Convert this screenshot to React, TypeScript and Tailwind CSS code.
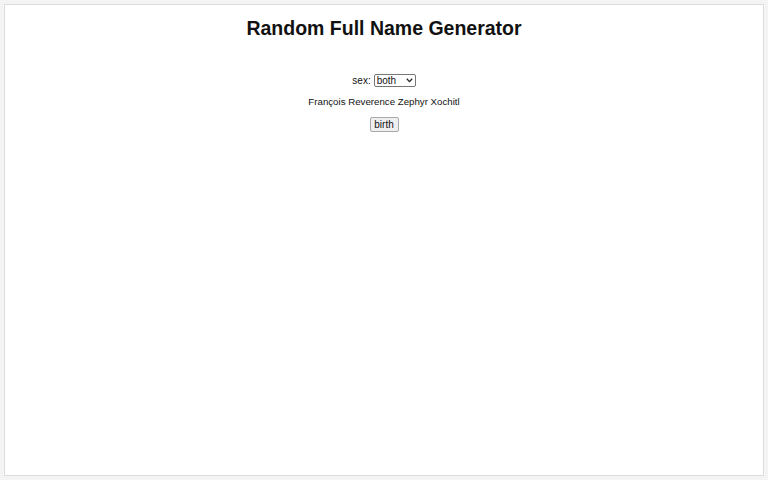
import { useState } from 'react';

export default function App() {
  const [sex, setSex] = useState('both');

  return (
    <div className="h-screen bg-[#f4f4f4] p-[4px] font-['Liberation_Sans',Arial,sans-serif] text-black">
      <div className="h-full bg-white border border-[#dcdcdc] flex flex-col items-center">
        <h1 className="mt-[12px] text-[19.5px] font-bold leading-[22px] text-[#111]">Random Full Name Generator</h1>
        <div className="mt-[35px] flex items-center gap-[3px] text-[10px] leading-[13px] text-[#111]">
          <span>sex:</span>
          <div className="relative">
            <select
              value={sex}
              onChange={(e) => setSex(e.target.value)}
              className="appearance-none block h-[13px] w-[42px] border border-[#767676] rounded-[2px] bg-white text-[10px] leading-[11px] pl-[2px] pr-[12px] text-[#111]"
            >
              <option value="both">both</option>
              <option value="male">male</option>
              <option value="female">female</option>
            </select>
            <svg className="absolute right-[3px] top-[4px] pointer-events-none" width="7" height="5" viewBox="0 0 7 5">
              <path d="M0.8 0.8 L3.5 3.6 L6.2 0.8" fill="none" stroke="#222" strokeWidth="1.3" />
            </svg>
          </div>
        </div>
        <p className="mt-[8px] text-[9.7px] leading-[13px] text-[#111]">François Reverence Zephyr Xochitl</p>
        <button className="mt-[9px] h-[15px] w-[29px] border border-[#a9a9a9] rounded-[2px] bg-[#efefef] text-[10px] leading-[12px] text-[#111]">
          birth
        </button>
      </div>
    </div>
  );
}
